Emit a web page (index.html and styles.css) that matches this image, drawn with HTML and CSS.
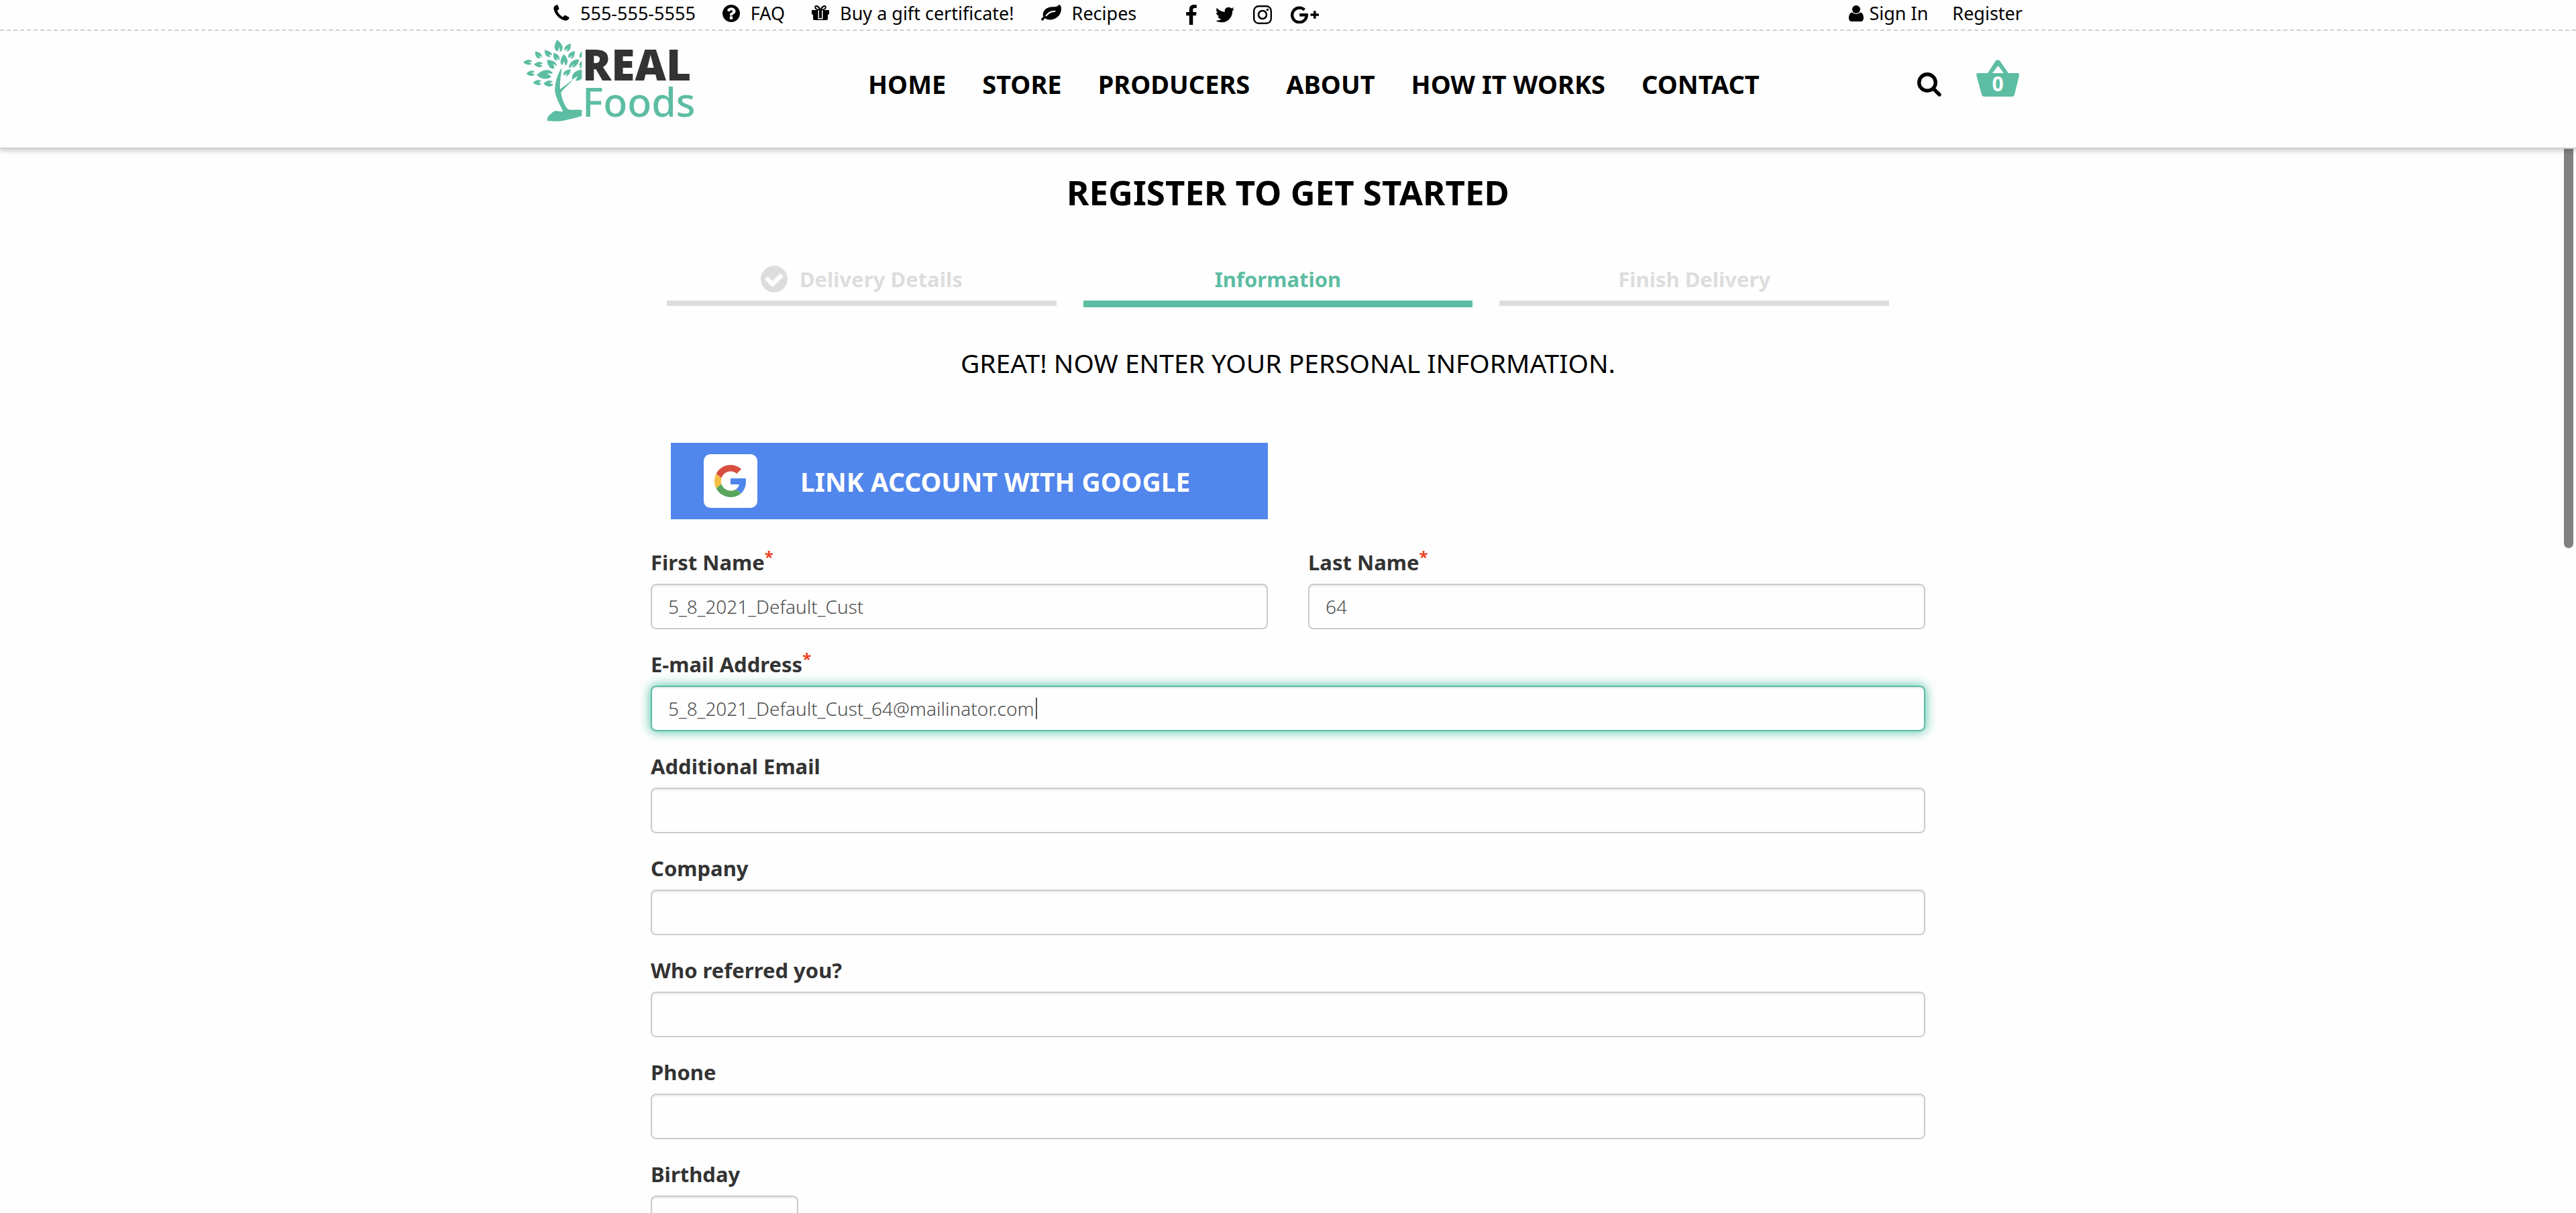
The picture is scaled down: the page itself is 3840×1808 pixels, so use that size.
FILE: index.html
```html
<!DOCTYPE html>
<html lang="en">
<head>
<meta charset="utf-8">
<meta name="viewport" content="width=device-width, initial-scale=1">
<title>Real Foods - Register</title>
<link rel="stylesheet" href="styles.css">
</head>
<body>
<header class="header">
  <div class="topbar">
    <div class="container topbar-inner">
      <ul class="links">
        <li><a href="#phone"><svg width="24" height="24" viewBox="0 0 24 24" aria-hidden="true"><path d="M4.600.3C5.500-.1 6.300.200 6.800 1.200L8.300 5.200C8.600 6.100 8.200 6.900 7.400 7.400L5.600 8.400C6.800 12.200 10.200 16.200 14.100 18.200L16 16.400C16.600 15.800 17.500 15.700 18.300 16.100L22.700 18.500C23.600 19 23.800 19.800 23.400 20.600C22.100 23.100 19.400 24.200 16.700 23.600C8.600 21.600 1.600 13.600.3 6C-.1 3.400 1.900 1.400 4.600.3Z"/></svg>555-555-5555</a></li>
        <li><a href="#faq"><svg width="26" height="26" viewBox="128 128 1536 1536" aria-hidden="true"><path d="M1024 1376v-192q0-14-9-23t-23-9h-192q-14 0-23 9t-9 23v192q0 14 9 23t23 9h192q14 0 23-9t9-23zm256-672q0-88-55.5-163t-138.500-116-170-41q-243 0-371 213-15 24 8 42l132 100q7 6 19 6 16 0 25-12 53-68 86-92 34-24 86-24 48 0 85.500 26t37.500 59q0 38-20 61t-68 45q-63 28-115.500 86.500t-52.500 125.500v36q0 14 9 23t23 9h192q14 0 23-9t9-23q0-19 21.500-49.500t54.500-49.500q32-18 49-28.500t46-35 44.500-48 28-60.500 12.500-81zm384 192q0 209-103 385.500t-279.500 279.500-385.500 103-385.500-103-279.500-279.500-103-385.500 103-385.500 279.500-279.500 385.500-103 385.500 103 279.500 279.500 103 385.500z"/></svg>FAQ</a></li>
        <li><a href="#gift"><svg width="26" height="24" viewBox="0 0 26 24" aria-hidden="true"><path d="M0 8h9.500v6.500H0zM16.500 8H26v6.500h-9.500zM2 14h7.500v9H4q-2 0-2-2zM16.500 14H24v7q0 2-2 2h-5.500zM9 21.500h8V23H9zM11 8h4v12h-4z"/><path d="M12.500 7.500C10.500 1.500 5 .500 5.200 4c.1 2.500 3 3.500 7.300 3.500zM13.500 7.500C15.500 1.500 21 .500 20.800 4c-.1 2.500-3 3.500-7.300 3.500z" fill="none" stroke="#000" stroke-width="2"/></svg>Buy a gift certificate!</a></li>
        <li><a href="#recipes"><svg width="30" height="24" viewBox="0 128 1792 1408" aria-hidden="true"><path d="M1280 704q0-26-19-45t-45-19q-172 0-318 49.500t-259.500 134-235.500 219.500q-19 21-19 45 0 26 19 45t45 19q24 0 45-19 27-24 74-71t67-66q137-124 268.500-176t313.500-52q26 0 45-19t19-45zm512-198q0 95-20 193-46 224-184.500 383t-357.500 268q-214 108-438 108-148 0-286-47-15-5-88-42t-96-37q-16 0-39.500 32t-45 70-52.500 70-60 32q-43 0-63.500-17.500t-45.500-59.500q-2-4-6-11t-5.500-10-3-9.500-1.500-13.500q0-35 31-73.500t68-65.500 68-56 31-48q0-4-14-38t-16-44q-9-51-9-104 0-115 43.500-220t119-184.500 170.500-139 204-95.500q55-18 145-25.500t179.500-9 178.500-6 163.500-24 113.500-56.500l29.500-29.500 29.500-28 27-20 36.500-16 43.500-4.500q39 0 70.500 46t47.500 112 24 124 8 96z"/></svg>Recipes</a></li>
      </ul>
      <ul class="social">
        <li><a href="#facebook" aria-label="Facebook"><svg width="16" height="30" viewBox="479 0 864 1664" aria-hidden="true"><path d="M1343 12v264h-157q-86 0-116 36t-30 108v189h293l-39 296h-254v759h-306v-759h-255v-296h255v-218q0-186 104-288.500t277-102.500q147 0 228 12z"/></svg></a></li>
        <li><a href="#twitter" aria-label="Twitter"><svg width="28" height="24" viewBox="108 256 1576 1280" aria-hidden="true"><path d="M1684 408q-67 98-162 167 1 14 1 42 0 130-38 259.500t-115.500 248.500-184.500 210.500-258 146-323 54.500q-271 0-496-145 35 4 78 4 225 0 401-138-105-2-188-64.500t-114-159.500q33 5 61 5 43 0 85-11-112-23-185.500-111.500t-73.500-205.500v-4q68 38 146 41-66-44-105-115t-39-154q0-88 44-163 121 149 294.500 238.500t371.500 99.500q-8-38-8-74 0-134 94.500-228.500t228.500-94.500q140 0 236 102 109-21 205-78-37 115-142 178 93-10 186-50z"/></svg></a></li>
        <li><a href="#instagram" aria-label="Instagram"><svg width="28" height="28" viewBox="0 0 28 28" aria-hidden="true"><g fill="none" stroke="#000"><rect x="1.200" y="1.200" width="25.600" height="25.600" rx="7" stroke-width="2.400"/><circle cx="14" cy="14" r="6" stroke-width="2.600"/></g><circle cx="21.500" cy="6.600" r="1.800"/></svg></a></li>
        <li><a href="#google-plus" aria-label="Google Plus"><svg width="42" height="26" viewBox="0 0 42 26" aria-hidden="true"><g fill="none" stroke="#000" stroke-width="4.400"><path d="M20.500 5.700A10.800 10.800 0 1 0 23.800 13.200H13.200"/><path d="M29.500 13H42M35.800 7.200V18.800" stroke-width="3.600"/></g></svg></a></li>
      </ul>
      <ul class="account">
        <li><a class="signin" href="#signin"><svg width="22" height="24" viewBox="0 0 22 24" aria-hidden="true"><circle cx="11" cy="6" r="6"/><path d="M5 10.500C1.500 10.800 0 14.500 0 19c0 3 1.700 5 4.500 5h13c2.800 0 4.500-2 4.500-5 0-4.500-1.500-8.200-5-8.500-1.600 1.600-3.600 2.500-6 2.500s-4.400-.9-6-2.500z"/></svg>Sign In</a></li>
        <li><a href="#register">Register</a></li>
      </ul>
    </div>
  </div>
  <div class="container mainbar">
    <a class="logo" href="#home">
      <svg width="88" height="124" viewBox="12 24 264 372" fill="#5cbda2" aria-hidden="true">
        <path d="M120 391C117 380 122 370 132 362C143 350 152 344 164 346C176 349 184 350 190 346C176 322 160 290 154 262C152 225 163 185 184 152C182 185 174 220 177 249C198 232 218 219 234 206C220 226 194 243 181 264C183 290 198 325 212 338C232 345 254 338 274 342V368C250 378 225 380 200 388C172 395 145 392 120 391Z"/>
        <path d="M163 28C178 40 190 54 188 66C187 74 182 80 176 82L174 60L166 80C148 74 148 52 163 28Z"/>
        <path d="M224 46C226 64 222 78 206 82L211 66L198 78C192 62 204 50 224 46Z"/>
        <path d="M65 80C84 82 98 92 96 106L82 98L90 110C74 114 64 102 65 80Z"/>
        <path d="M107 74C126 76 142 84 140 98L126 92L134 104C116 108 108 94 107 74Z"/>
        <path d="M148 86C166 90 180 104 172 120L162 108L164 122C148 118 144 104 148 86Z"/>
        <path d="M194 92C208 108 216 122 206 138L200 144L195 124L186 142C172 130 180 108 194 92Z"/>
        <path d="M242 78C244 96 238 110 224 114L230 98L216 110C208 94 222 82 242 78Z"/>
        <path d="M12 128C28 114 46 114 52 126L36 128L50 134C40 144 24 140 12 128Z"/>
        <path d="M60 138C74 124 92 124 99 134L84 138L99 144C88 156 72 150 60 138Z"/>
        <path d="M118 118C140 118 162 126 162 146L146 134L152 156C130 162 120 142 118 118Z"/>
        <path d="M216 152C218 130 236 114 262 116C258 136 246 152 230 152L240 136L220 154Z"/>
        <path d="M26 179C40 164 56 162 63 172L48 177L64 182C54 194 38 190 26 179Z"/>
        <path d="M72 185C92 164 124 154 140 172L144 180L118 178L138 192C124 208 92 206 72 185Z"/>
        <path d="M224 160C222 180 214 190 202 192L209 178L194 188C186 172 204 162 224 160Z"/>
        <path d="M55 220C70 206 84 204 94 214L80 219L93 225C82 236 68 230 55 220Z"/>
        <path d="M102 224C116 208 136 206 145 216L130 221L147 229C134 242 116 238 102 224Z"/>
        <path d="M274 162V202Q262 214 246 210L256 190L232 206C224 184 246 162 274 162Z"/>
        <path d="M274 80V104L264 109Q260 90 274 80ZM274 122V150L263 158L268 142Q260 146 262 138Q264 128 274 122Z"/>
      </svg>
      <span class="logo-text"><span class="logo-real">REAL</span><span class="logo-foods">Foods</span></span>
    </a>
    <nav class="nav">
      <a href="#home">HOME</a>
      <a href="#store">STORE</a>
      <a href="#producers">PRODUCERS</a>
      <a href="#about">ABOUT</a>
      <a href="#how">HOW IT WORKS</a>
      <a href="#contact">CONTACT</a>
    </nav>
    <div class="tools">
      <button class="search" type="button" aria-label="Search"><svg width="36" height="36" viewBox="0 0 36 36" aria-hidden="true"><g fill="none" stroke="#000" stroke-width="5.400"><circle cx="15" cy="15" r="12.300"/><path d="M24.500 24.500L33 33" stroke-linecap="round"/></g></svg></button>
      <a class="basket" href="#cart" aria-label="Basket, 0 items"><svg width="64" height="56" viewBox="0 0 64 56" aria-hidden="true"><path fill="#5cbda2" fill-rule="evenodd" d="M29 1.500Q32 -1 35 1.500L48 20H62Q64.500 20.500 64 23.500L57 52Q56 55 53 55H12Q9 55 8 52L.3 23.500Q-.5 20.500 2 20H17ZM32.500 9L24 20H41Z"/></svg><span class="count">0</span></a>
    </div>
  </div>
</header>

<main class="main">
  <h1 class="title">REGISTER TO GET STARTED</h1>
  <ol class="steps">
    <li class="step"><svg width="40" height="40" viewBox="128 128 1536 1536" fill="#ddd" aria-hidden="true"><path d="M1412 734q0-28-18-46l-91-90q-19-19-45-19t-45 19l-408 407-226-226q-19-19-45-19t-45 19l-91 90q-18 18-18 46 0 27 18 45l362 362q19 19 45 19 27 0 46-19l543-543q18-18 18-45zm252 162q0 209-103 385.500t-279.500 279.500-385.500 103-385.500-103-279.500-279.500-103-385.500 103-385.500 279.500-279.500 385.500-103 385.500 103 279.500 279.500 103 385.500z"/></svg>Delivery Details</li>
    <li class="step step-active" aria-current="step">Information</li>
    <li class="step">Finish Delivery</li>
  </ol>
  <p class="subtitle">GREAT! NOW ENTER YOUR PERSONAL INFORMATION.</p>

  <form class="form">
    <button class="google" type="button">
      <span class="google-tile"><svg width="48" height="48" viewBox="0 0 48 48" aria-hidden="true"><path fill="#d84f3f" d="M24 9.500c3.540 0 6.710 1.220 9.210 3.600l6.850-6.850C35.900 2.380 30.470 0 24 0 14.620 0 6.510 5.380 2.560 13.220l7.980 6.190C12.430 13.720 17.740 9.500 24 9.500z"/><path fill="#4f86ec" d="M46.980 24.550c0-1.570-.15-3.090-.38-4.550H24v9.020h12.940c-.58 2.960-2.260 5.480-4.780 7.180l7.730 6c4.510-4.180 7.090-10.360 7.090-17.650z"/><path fill="#f2bd42" d="M10.530 28.590c-.48-1.450-.76-2.990-.76-4.590s.27-3.140.76-4.590l-7.980-6.190C.92 16.460 0 20.120 0 24c0 3.880.92 7.540 2.560 10.780l7.970-6.190z"/><path fill="#58a55c" d="M24 48c6.480 0 11.930-2.130 15.890-5.810l-7.730-6c-2.150 1.450-4.920 2.300-8.160 2.300-6.260 0-11.570-4.220-13.470-9.910l-7.980 6.190C6.510 42.620 14.620 48 24 48z"/></svg></span>
      LINK ACCOUNT WITH GOOGLE
    </button>
    <div class="fields">
      <div class="row">
        <div class="field"><label for="first">First Name<sup>*</sup></label><input id="first" type="text" value="5_8_2021_Default_Cust"></div>
        <div class="field"><label for="last">Last Name<sup>*</sup></label><input id="last" type="text" value="64"></div>
      </div>
      <div class="field"><label for="email">E-mail Address<sup>*</sup></label><div class="caret-box"><input id="email" class="focused" type="text" value="5_8_2021_Default_Cust_64@mailinator.com"><span class="caret"></span></div></div>
      <div class="field"><label for="email2">Additional Email</label><input id="email2" type="text"></div>
      <div class="field"><label for="company">Company</label><input id="company" type="text"></div>
      <div class="field"><label for="referrer">Who referred you?</label><input id="referrer" type="text"></div>
      <div class="field"><label for="phone">Phone</label><input id="phone" type="text"></div>
      <div class="field"><label for="birthday">Birthday</label><input id="birthday" class="short" type="text"></div>
    </div>
  </form>
  <div class="scroll-thumb"></div>
</main>
</body>
</html>
```
FILE: styles.css
```css
*, *::before, *::after { box-sizing: border-box; }

html, body { height: 100%; }

body {
  margin: 0;
  display: flex;
  flex-direction: column;
  overflow: hidden;
  background: #fefefe;
  color: #000;
  font-family: "Noto Sans", "Open Sans", sans-serif;
}

ul, ol { margin: 0; padding: 0; list-style: none; }
a { color: inherit; text-decoration: none; }
button { border: 0; padding: 0; background: none; font: inherit; cursor: pointer; }
svg { display: block; flex: none; }

.container {
  width: 100%;
  max-width: 2340px;
  margin: 0 auto;
  padding: 0 30px;
}

/* Header */
.header {
  position: relative;
  z-index: 2;
  flex: none;
  background: #fefefe;
  border-bottom: 2px solid #ccc;
  box-shadow: 0 4px 6px rgba(0, 0, 0, 0.16);
}

.topbar {
  border-bottom: 2px dashed #ccc;
  font-size: 27px;
  line-height: 40px;
}

.topbar-inner {
  display: flex;
  padding: 0 75px;
  height: 44px;
}

.links, .social, .account { display: flex; }
.links { gap: 40px; }
.links a { display: flex; gap: 16px; }
.links svg { margin-top: 7px; }

.social { align-items: center; gap: 28px; margin-left: 74px; }

.account { gap: 36px; margin-left: auto; }
.signin { display: flex; gap: 8px; }
.signin svg { margin-top: 8px; }

.mainbar {
  display: flex;
  align-items: flex-start;
  padding: 12px 80px 38px 30px;
}

.logo { display: flex; width: 514px; }
.logo-text { display: flex; flex-direction: column; padding-top: 13px; }
.logo-real { font-size: 64px; font-weight: 900; line-height: 50px; color: #333; }
.logo-foods { font-size: 59px; font-weight: 500; line-height: 61px; color: #5cbda2; }

.nav {
  display: flex;
  gap: 54px;
  margin-top: 41px;
  font-size: 38px;
  font-weight: 700;
  line-height: 52px;
}

.tools { display: flex; gap: 52px; margin: 31px 0 0 auto; }
.search { height: 36px; margin-top: 19px; }
.basket { display: grid; justify-items: center; }
.basket svg, .count { grid-area: 1 / 1; }
.count {
  padding-top: 16px;
  font-size: 30px;
  font-weight: 700;
  line-height: 40px;
  color: #fff;
}

/* Page body */
.main {
  position: relative;
  flex: 1;
  min-height: 0;
  padding: 34px 40px 0;
}

.title {
  margin: 0 0 78px;
  font-size: 51px;
  font-weight: 700;
  line-height: 60px;
  text-align: center;
}

.steps {
  display: grid;
  grid-template-columns: repeat(3, 1fr);
  align-items: start;
  gap: 40px;
  max-width: 1852px;
  margin: 0 auto;
  padding-right: 30px;
}

.step {
  display: flex;
  justify-content: center;
  gap: 18px;
  padding-bottom: 10px;
  border-bottom: 8px solid #ddd;
  color: #ddd;
  font-size: 31px;
  font-weight: 700;
  line-height: 44px;
}

.step svg { margin-top: 2px; }
.step-active { border-bottom: 10px solid #5cbda2; color: #5cbda2; }

.subtitle {
  margin: 58px 0 94px;
  font-size: 39px;
  line-height: 50px;
  text-align: center;
}

.form { max-width: 1900px; margin: 0 auto; }

.google {
  display: flex;
  align-items: center;
  gap: 64px;
  width: 890px;
  height: 114px;
  margin: 0 0 42px 30px;
  padding: 0 49px;
  background: #5186ec;
  color: #fff;
  font-size: 39px;
  font-weight: 700;
}

.google-tile {
  display: grid;
  place-items: center;
  width: 80px;
  height: 80px;
  border-radius: 10px;
  background: #fff;
}

.fields, .row { display: grid; gap: 30px; }
.row { grid-template-columns: 1fr 1fr; column-gap: 60px; }

.field { display: flex; flex-direction: column; gap: 10px; }

.field label {
  color: #333;
  font-size: 31px;
  font-weight: 700;
  line-height: 44px;
}

.field sup {
  color: #f04124;
  font-size: 24px;
  line-height: 0;
}

.field input {
  display: block;
  width: 100%;
  height: 68px;
  padding: 0 24px;
  border: 2px solid #ccc;
  border-radius: 8px;
  outline: 0;
  background: #fefefe;
  box-shadow: inset 0 2px 2px rgba(0, 0, 0, 0.08);
  color: #4d4d4d;
  font-family: inherit;
  font-size: 28px;
  font-weight: 300;
}

.field .short { width: 220px; }

.field input:focus,
.field .focused {
  border-color: #5cbda2;
  box-shadow: inset 0 2px 2px rgba(0, 0, 0, 0.08), 0 0 16px 1px rgba(67, 190, 158, 0.9);
}

/* Text cursor drawn over the focused box */
.caret-box { position: relative; }
.caret {
  position: absolute;
  top: 18px;
  left: 574px;
  width: 2px;
  height: 32px;
  background: #555;
}

/* Overlay scroll indicator */
.scroll-thumb {
  position: absolute;
  top: 0;
  right: 4px;
  width: 14px;
  height: 595px;
  border-radius: 0 0 7px 7px;
  background: #808080;
}
```
